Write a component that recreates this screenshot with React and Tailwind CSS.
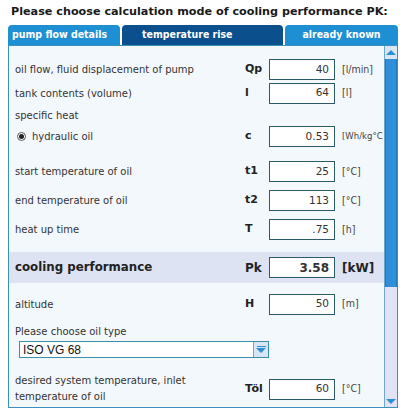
function Field({ sym, value, unit, bold, small }) {
  const unitCls = bold
    ? "font-bold text-[12px] text-[#222]"
    : `${small ? "text-[9.5px]" : "text-[10.5px]"} text-[#444] font-['DejaVu_Sans_Condensed','DejaVu_Sans',sans-serif]`;
  return (
    <div className="flex items-center shrink-0">
      <div className={`w-[24px] ${bold ? "text-[12px]" : "text-[11px]"} font-bold text-[#222]`}>{sym}</div>
      <div className={`w-[66px] h-[21px] border border-[#2b5a68] bg-white flex items-center justify-end pr-[5px] text-[#333] ${bold ? "font-bold text-[12px] text-[#111]" : "text-[10.5px]"}`}>
        {value}
      </div>
      <div className={`pl-[7px] whitespace-nowrap ${unitCls}`}>{unit}</div>
    </div>
  );
}

function Row({ label, sym, value, unit, className = "" }) {
  return (
    <div className={`flex items-center ${className}`}>
      <div className="w-[230px] shrink-0 text-[10px] text-[#333]">{label}</div>
      <Field sym={sym} value={value} unit={unit} />
    </div>
  );
}

function Scrollbar() {
  return (
    <div className="w-[13px] shrink-0 flex flex-col border-l border-[#6fa6cf] bg-[#e0e2f5]">
      <div className="h-[13px] flex items-center justify-center bg-[#d7e7f6]">
        <div className="w-0 h-0 border-l-[5px] border-r-[5px] border-b-[5px] border-l-transparent border-r-transparent border-b-[#2d8fd6]" />
      </div>
      <div className="h-[228px] bg-[#2f8fd8] border-x border-[#2377bd]" />
      <div className="flex-1" />
      <div className="h-[12px] flex items-center justify-center bg-[#e0e2f5]">
        <div className="w-0 h-0 border-l-[5px] border-r-[5px] border-t-[5px] border-l-transparent border-r-transparent border-t-[#2d8fd6]" />
      </div>
    </div>
  );
}

const tab = "rounded-t-[4px] text-white text-[10.5px] font-bold flex items-center whitespace-nowrap font-['DejaVu_Sans_Condensed','DejaVu_Sans',sans-serif]";

export default function App() {
  return (
    <div className="w-[406px] h-[414px] bg-white font-['DejaVu_Sans',Verdana,sans-serif] overflow-hidden">
      <div className="pt-[5px] pl-[11px] h-[19px] leading-[14px] text-[11.2px] font-bold text-[#1a1a1a] whitespace-nowrap">
        Please choose calculation mode of cooling performance PK:
      </div>
      <div className="mx-[8px] mt-[6px] flex gap-[2px] h-[20px]">
        <div className={`w-[112px] bg-[#1f8fd4] pl-[4px] ${tab}`}>pump flow details</div>
        <div className={`w-[161px] bg-[#0b4f8c] pl-[20px] ${tab}`}>temperature rise</div>
        <div className={`flex-1 bg-[#1f8fd4] justify-center ${tab}`}>already known</div>
      </div>
      <div className="mx-[8px] h-[363px] border border-[#3d8fbd] bg-[#f3f8fc] flex">
        <div className="flex-1 overflow-hidden">
          <div className="pl-[6px] pt-[11px]">
            <Row label="oil flow, fluid displacement of pump" sym="Qp" value="40" unit="[l/min]" className="h-[25px]" />
            <Row label="tank contents (volume)" sym="l" value="64" unit="[l]" className="h-[22px]" />
            <div className="h-[22px] flex items-center text-[10px] text-[#333]">specific heat</div>
            <div className="flex items-center h-[21px]">
              <div className="w-[230px] shrink-0 flex items-center text-[10px] text-[#333] pl-[2px]">
                <span className="w-[9px] h-[9px] rounded-full border border-[#555] bg-white flex items-center justify-center mr-[6px]">
                  <span className="w-[5px] h-[5px] rounded-full bg-[#222]" />
                </span>
                hydraulic oil
              </div>
              <Field sym="c" value="0.53" unit="[Wh/kg°C" small />
            </div>
            <Row label="start temperature of oil" sym="t1" value="25" unit="[°C]" className="h-[29px] mt-[10px]" />
            <Row label="end temperature of oil" sym="t2" value="113" unit="[°C]" className="h-[29px]" />
            <Row label="heat up time" sym="T" value=".75" unit="[h]" className="h-[29px]" />
          </div>
          <div className="mt-[8px] h-[31px] bg-[#dde3f2] flex items-center pl-[6px]">
            <div className="w-[230px] shrink-0 text-[11.8px] font-bold text-[#222]">cooling performance</div>
            <Field sym="Pk" value="3.58" unit="[kW]" bold />
          </div>
          <div className="pl-[6px]">
            <Row label="altitude" sym="H" value="50" unit="[m]" className="h-[22px] mt-[10px]" />
            <div className="h-[17px] mt-[8px] flex items-center text-[10px] text-[#333]">Please choose oil type</div>
            <div className="ml-[4px] mt-[1px] w-[250px] h-[17px] border border-[#3a8fa8] bg-white flex items-center">
              <div className="flex-1 pl-[3px] text-[12px] text-[#111] font-['Liberation_Sans',Arial,sans-serif]">ISO VG 68</div>
              <div className="w-[15px] h-[15px] bg-[#d6e6f7] border-l border-[#6aa9d3] flex items-center justify-center">
                <div className="flex flex-col items-center gap-[1px]">
                  <div className="w-[9px] h-[1px] bg-[#2d8fd6]" />
                  <div className="w-0 h-0 border-l-[5px] border-r-[5px] border-t-[5px] border-l-transparent border-r-transparent border-t-[#2d8fd6]" />
                </div>
              </div>
            </div>
            <div className="flex items-center h-[34px] mt-[14px]">
              <div className="w-[230px] shrink-0 text-[10px] text-[#333] leading-[16px]">
                desired system temperature, inlet<br />temperature of oil
              </div>
              <Field sym="Töl" value="60" unit="[°C]" />
            </div>
          </div>
        </div>
        <Scrollbar />
      </div>
    </div>
  );
}
